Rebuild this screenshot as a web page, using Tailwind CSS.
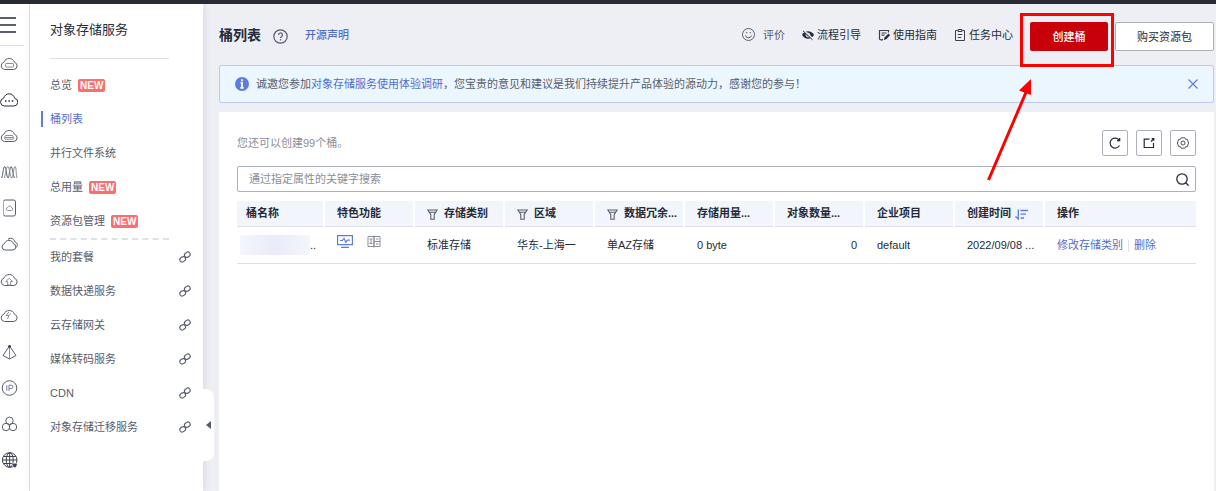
<!DOCTYPE html>
<html lang="zh-CN">
<head>
  <meta charset="UTF-8" />
  <meta name="viewport" content="width=device-width, initial-scale=1.0"/>
  <title>对象存储服务 - 桶列表</title>
  <script src="https://cdn.jsdelivr.net/npm/@tailwindcss/browser@4"></script>
</head>
<body class="min-h-screen flex flex-col overflow-x-hidden bg-[#eeeff5] font-['Liberation_Sans','Noto_Sans_CJK_SC',sans-serif] text-[11px] leading-4 text-[#252b3a]">
  <!-- Top bar -->
  <div class="h-1 bg-[#282b33]"></div>

  <div class="flex flex-1">
    <!-- Icon rail -->
    <nav class="w-[30px] shrink-0 bg-white border-r border-[#dfe1e6]" aria-label="服务">
      <button type="button" aria-label="菜单" class="block w-6 h-[42px] border-b border-[#dfe1e6]">
        <svg class="w-4 h-4" viewBox="0 0 16 16" stroke="#252b3a" stroke-width="1.6"><path d="M0 1h16M0 8h16M0 15h16"/></svg>
      </button>
      <ul class="w-5 text-[#575d6c] [&>li]:h-9 [&>li]:flex [&>li]:items-center [&_svg]:w-[18px] [&_svg]:h-[18px]">
        <li><a href="#" aria-label="云服务器"><svg viewBox="0 0 18 18" fill="none" stroke="currentColor"><path d="M4.5 14.5a3.7 3.7 0 0 1-.7-7.2C4.8 4.8 6.8 3.5 9.2 3.5s4.5 1.4 5.3 3.8a3.7 3.7 0 0 1-.7 7.2z"/><rect x="5.5" y="8.5" width="8" height="3.5" rx=".8" stroke="#8a8e99"/></svg></a></li>
        <li><a href="#" aria-label="弹性云"><svg viewBox="0 0 18 18" fill="none" stroke="#252b3a"><path d="M4.3 15a3.9 3.9 0 0 1-.7-7.7C4.4 4.4 6.6 2.8 9.2 2.8s4.7 1.6 5.5 4.5a3.9 3.9 0 0 1-.7 7.700z"/><path d="M5 10h1.500M8.400 10h1.500M11.800 10h1.500" stroke-width="1.400"/></svg></a></li>
        <li><a href="#" aria-label="裸金属"><svg viewBox="0 0 18 18" fill="none" stroke="currentColor"><path d="M4.500 14.500a3.700 3.700 0 0 1-.7-7.200C4.800 4.800 6.800 3.500 9.200 3.500s4.500 1.300 5.300 3.800a3.700 3.700 0 0 1-.7 7.200z"/><path d="M5.500 8.500h7l1.200 2-.6 1.700H5l-.6-1.700zM5 10.500h8" stroke="#8a8e99"/></svg></a></li>
        <li><a href="#" aria-label="伸缩"><svg viewBox="0 0 18 18" fill="none" stroke="currentColor"><path d="M1.500 15C3 13 3 3.500 4.700 3.500S6.500 15 8 15 9.500 3.500 11 3.500 13 13 14.500 15"/><path d="M4 15C5.800 13 6 3.500 7.800 3.500S10 13 11.500 15s2-11.500 3.500-11.500S16 13 17 15" stroke="#8a8e99"/></svg></a></li>
        <li><a href="#" aria-label="存储"><svg viewBox="0 0 18 18" fill="none" stroke="currentColor"><rect x="3.500" y="1" width="12" height="16" rx="1.800"/><path d="M7.500 11.500a1.500 1.500 0 0 1-.2-2.900c.4-1 1.200-1.500 2.200-1.500s1.800.5 2.200 1.500a1.500 1.500 0 0 1-.2 2.900z" stroke="#8a8e99"/><path d="M3.500 2v14" stroke="#6cb8f0"/></svg></a></li>
        <li><a href="#" aria-label="云备份"><svg viewBox="0 0 18 18" fill="none" stroke="currentColor"><path d="M5 15a3.200 3.200 0 0 1-.5-6.300C5.200 6.500 6.900 5.300 9 5.300s3.600 1.200 4.300 3.400A3.200 3.200 0 0 1 13 15z"/><path d="M8 4.300c2.700-2.200 6.400-.7 6.800 2.600 3 .7 3.400 4.500.9 5.700"/></svg></a></li>
        <li><a href="#" aria-label="上传"><svg viewBox="0 0 18 18" fill="none" stroke="currentColor"><path d="M4.500 14.500a3.700 3.700 0 0 1-.7-7.200C4.800 4.800 6.800 3.500 9.200 3.500s4.500 1.300 5.300 3.800a3.700 3.700 0 0 1-.7 7.200z"/><path d="M9.200 7.200 5.900 10.500h1.800v3.500h3v-3.500h1.800z" stroke="#8a8e99"/></svg></a></li>
        <li><a href="#" aria-label="加速"><svg viewBox="0 0 18 18" fill="none" stroke="currentColor"><path d="M4.500 14.500a3.700 3.700 0 0 1-.7-7.200C4.800 4.800 6.800 3.500 9.200 3.500s4.500 1.300 5.300 3.800a3.700 3.700 0 0 1-.7 7.200z"/><path d="M9 5 6 8.500h3L7.500 12M9 8.500l1.500-2" stroke="#8a8e99"/></svg></a></li>
        <li><a href="#" aria-label="网络"><svg viewBox="0 0 18 18" fill="none" stroke="currentColor"><path d="M9.500 3 3 12.500l6.500 3.500 6.500-3.500z"/><path d="M9.500 3v13" stroke="#8a8e99"/><circle cx="9.500" cy="3.200" r="1.200" fill="#252b3a" stroke="none"/></svg></a></li>
        <li><a href="#" aria-label="弹性公网IP"><svg viewBox="0 0 18 18" fill="none" stroke="currentColor"><circle cx="9.500" cy="9" r="7.300"/><path d="M6.800 6.200v5.600M9 11.800V6.200h2.200a1.700 1.700 0 0 1 0 3.400H9" stroke="#7c78a8"/></svg></a></li>
        <li><a href="#" aria-label="集群"><svg viewBox="0 0 18 18" fill="none" stroke="currentColor"><circle cx="9.500" cy="5.800" r="3.700"/><circle cx="6" cy="12" r="3.700"/><circle cx="13" cy="12" r="3.700"/></svg></a></li>
        <li><a href="#" aria-label="域名"><svg viewBox="0 0 18 18" fill="none" stroke="#3b4050"><circle cx="9.700" cy="9" r="7.300"/><ellipse cx="9.700" cy="9" rx="3.500" ry="7.300"/><path d="M9.700 1.700v14.600M2.400 9H17M3.500 5.500h12.400M3.500 12.500h12.400"/><path d="M12 12.500h5.500L16 16.500h-2.500z" fill="#3b4050" stroke="#fff" stroke-width=".5"/></svg></a></li>
      </ul>
    </nav>

    <!-- Service menu -->
    <aside class="relative w-[173px] shrink-0 bg-white pl-5 shadow-[2px_0_6px_rgba(60,65,90,0.10)]">
      <h2 class="h-[55px] mr-[34px] pt-4 text-[13px] leading-5 border-b border-[#dfe1e6]">对象存储服务</h2>
      <ul class="mt-[9px] mr-[34px] border-b-2 border-dashed border-[#dfe1e6] text-[#575d6c] [&>li]:h-[34px] [&>li]:flex [&>li]:items-center [&>li]:gap-[6px] [&_span]:px-[2px] [&_span]:h-[13px] [&_span]:leading-[13px] [&_span]:rounded-xs [&_span]:bg-[#fa6e6e] [&_span]:text-[10px] [&_span]:font-bold [&_span]:text-white">
        <li><a href="#">总览</a><span>NEW</span></li>
        <li class="relative text-[#526ecc]"><i class="absolute -left-[9px] w-[2px] h-4 bg-[#5e7ce0]"></i><a href="#">桶列表</a></li>
        <li><a href="#">并行文件系统</a></li>
        <li><a href="#">总用量</a><span>NEW</span></li>
        <li><a href="#">资源包管理</a><span>NEW</span></li>
      </ul>
      <ul id="external-links" class="mr-3 text-[#575d6c]"></ul>
      <button type="button" aria-label="收起" class="absolute left-full top-[385px] w-[11px] h-[72px] rounded-r-lg bg-white flex items-center justify-center">
        <svg class="w-[5px] h-2" viewBox="0 0 5 8" fill="#575d6c"><path d="M5 0v8L0 4z"/></svg>
      </button>
    </aside>

    <!-- Main -->
    <main class="flex-1 min-w-0 flex flex-col pl-4 pr-[2px]">
      <header class="flex items-center h-[61px] pt-1">
        <h1 class="pb-1 text-sm leading-5 font-bold">桶列表</h1>
        <button type="button" aria-label="帮助" class="ml-3">
          <svg class="w-[15px] h-[15px]" viewBox="0 0 15 15" fill="none" stroke="#575d6c" stroke-width="1.200"><circle cx="7.500" cy="7.500" r="6.700"/><path d="M5.500 6a2 2 0 1 1 3 1.700c-.7.400-1 .7-1 1.400M7.500 10v1.400"/></svg>
        </button>
        <a href="#" class="ml-[17px] pb-1 font-medium text-[#526ecc]">开源声明</a>

        <div class="ml-auto pb-1 flex items-center gap-[17px] [&>a]:flex [&>a]:items-center [&>a]:gap-[3px] [&_svg]:w-3 [&_svg]:h-3">
          <button type="button" class="flex items-center gap-2 text-[#575d6c] [&>svg]:w-[13px] [&>svg]:h-[13px]">
            <svg viewBox="0 0 13 13" fill="none" stroke="currentColor"><circle cx="6.500" cy="6.500" r="6"/><path d="M3.500 7.500a3.100 3.100 0 0 0 6 0M4 4.700h1.300M7.700 4.700H9"/></svg>
            评价
          </button>
          <a href="#">
            <svg viewBox="0 0 12 12" fill="#252b3a"><path d="M0 6c1.400-2.400 3.500-3.700 6-3.700S10.600 3.600 12 6c-1.400 2.400-3.500 3.700-6 3.700S1.400 8.400 0 6z"/><circle cx="6" cy="6" r="1.900" fill="none" stroke="#eeeff5"/><path d="M1.500 1.200 11 10.500" stroke="#eeeff5" stroke-width="2"/><path d="M1 1.800l9.500 9" stroke="#252b3a"/></svg>
            流程引导
          </a>
          <a href="#">
            <svg viewBox="0 0 12 12" fill="none" stroke="#3b4050" stroke-width="1.200"><path d="M10.500 3.500V1.500h-9v8.700l2 .8 1.500-.6M3.500 4h5M3.500 6.200h3"/><path d="m6 11 .5-2.500 4-4 1.500 1.700-3.700 4z" fill="#252b3a" stroke="none"/></svg>
            使用指南
          </a>
          <a href="#">
            <svg viewBox="0 0 12 12" fill="none" stroke="#3b4050"><path d="M3.500 1.500h-2v10h9v-10h-2M4 .5h4v2H4zM3.700 5.500h4.600M3.700 8.500h3.500"/></svg>
            任务中心
          </a>
        </div>

        <div class="relative ml-[17px]">
          <button type="button" class="block w-[78px] h-[29px] rounded-xs bg-[#c7000b] text-white font-medium">创建桶</button>
          <!-- Highlight frame and arrow around the create button -->
          <div class="absolute z-10 -left-[10px] -right-[6px] -top-[9px] -bottom-4 border-3 border-[#f00] pointer-events-none"></div>
          <svg class="absolute z-10 -left-[44px] top-[57px] w-[48px] h-[104px] pointer-events-none" viewBox="0 0 48 104" fill="#f00"><path d="M2.500 101 41 11" stroke="#f00" stroke-width="3"/><path d="M45 0v16L33 11.500z"/></svg>
        </div>
        <button type="button" class="ml-[7px] w-[99px] h-[29px] rounded-xs border border-[#adb0b8] bg-white">购买资源包</button>
      </header>

      <!-- Notice -->
      <section class="flex items-center h-[38px] px-[15px] rounded-xs border border-[#bcc9f5] bg-[#ebf6ff] text-[#575d6c]">
        <svg class="w-[14px] h-[14px] mr-[7px]" viewBox="0 0 14 14"><circle cx="7" cy="7" r="7" fill="#5e7ce0"/><path d="M7 2.300v2M5.600 5.800H7v4.700M5.300 10.800h3.400" fill="none" stroke="#fff" stroke-width="1.800"/></svg>
        <p>诚邀您参加<a href="#" class="text-[#526ecc]">对象存储服务使用体验调研</a>，您宝贵的意见和建议是我们持续提升产品体验的源动力，感谢您的参与！</p>
        <button type="button" aria-label="关闭" class="ml-auto">
          <svg class="w-[10px] h-[10px]" viewBox="0 0 10 10" stroke="#5e7ce0" stroke-width="1.200"><path d="m.5.500 9 9m0-9-9 9"/></svg>
        </button>
      </section>

      <!-- Bucket list -->
      <section class="flex-1 mt-[9px] px-[18px] pt-[18px] bg-white">
        <div class="flex items-center justify-between">
          <p class="text-[#8a8e99]">您还可以创建99个桶。</p>
          <div class="flex gap-2 [&>button]:w-[26px] [&>button]:h-[26px] [&>button]:flex [&>button]:items-center [&>button]:justify-center [&>button]:rounded-xs [&>button]:border [&>button]:border-[#adb0b8] [&_svg]:w-3 [&_svg]:h-3">
            <button type="button" aria-label="刷新"><svg viewBox="0 0 12 12" fill="none" stroke="#252b3a" stroke-width="1.200"><path d="M10.300 3.300A5 5 0 1 0 10.500 8.500M10.700 1v2.700H8"/></svg></button>
            <button type="button" aria-label="导出"><svg viewBox="0 0 12 12" fill="none" stroke="#252b3a" stroke-width="1.200"><path d="M6.500 2.200H1.200v8.300h9.300V6M8 4.500l2.500-2.500M8.700 1.700h2.100v2.100"/></svg></button>
            <button type="button" aria-label="设置"><svg viewBox="0 0 12 12" fill="none" stroke="#3b4050" stroke-width=".9"><path d="M4.200.8h3.600l.8 1.500 1.700.1L11.600 6l-1.300 3.600-1.700.1-.8 1.500H4.200l-.8-1.500-1.700-.1L.4 6l1.300-3.600 1.700-.1z"/><circle cx="6" cy="6" r="2"/></svg></button>
          </div>
        </div>

        <div class="flex items-center h-[26px] mt-[10px] pl-[11px] pr-[6px] rounded-xs border border-[#adb0b8]">
          <input type="search" aria-label="搜索" placeholder="通过指定属性的关键字搜索" class="flex-1 min-w-0 outline-none placeholder:text-[#8a8e99]">
          <button type="button" aria-label="搜索">
            <svg class="w-[13px] h-[13px]" viewBox="0 0 13 13" fill="none" stroke="#252b3a" stroke-width="1.300"><circle cx="6" cy="6" r="5.200"/><path d="m9.700 9.700 2.900 2.900"/></svg>
          </button>
        </div>

        <table class="w-full mt-[9px] table-fixed border-collapse text-left [&_th]:h-[25px] [&_th]:p-0 [&_th]:pl-3 [&_th]:border-r-2 [&_th]:border-r-white [&_th:last-child]:border-r-0 [&_th]:whitespace-nowrap [&_td]:h-[37px] [&_td]:pl-[13px] [&_td]:whitespace-nowrap [&_svg]:inline-block">
          <colgroup>
            <col class="w-[87px]"><col class="w-[90px]"><col class="w-[90px]"><col class="w-[90px]"><col class="w-[90px]"><col class="w-[90px]"><col class="w-[90px]"><col class="w-[90px]"><col class="w-[90px]"><col>
          </colgroup>
          <thead class="bg-[#f2f5fc] border-b border-[#dfe1e6]">
            <tr>
              <th><span class="-ml-[3px]">桶名称</span></th>
              <th>特色功能</th>
              <th><svg class="w-[11px] h-[11px] mr-[6px]" viewBox="0 0 11 11" fill="none" stroke="#575d6c" stroke-width="1.100"><path d="M.8 1h9.400L7.200 5.500v4.700H3.800V5.500zM2 3.200h7"/></svg>存储类别</th>
              <th><svg class="w-[11px] h-[11px] mr-[6px]" viewBox="0 0 11 11" fill="none" stroke="#575d6c" stroke-width="1.100"><path d="M.8 1h9.400L7.200 5.500v4.700H3.800V5.500zM2 3.200h7"/></svg>区域</th>
              <th><svg class="w-[11px] h-[11px] mr-[6px]" viewBox="0 0 11 11" fill="none" stroke="#575d6c" stroke-width="1.100"><path d="M.8 1h9.400L7.200 5.500v4.700H3.800V5.500zM2 3.200h7"/></svg>数据冗余...</th>
              <th>存储用量...</th>
              <th>对象数量...</th>
              <th>企业项目</th>
              <th>创建时间<svg class="w-[13px] h-[11px] ml-1" viewBox="0 0 13 11" fill="none" stroke="#5e7ce0" stroke-width="1.300"><path d="M3.300.500v9.500L.5 7.500M5.500 1.500H13M5.500 5.200h5.500M5.500 9h3.500"/></svg></th>
              <th>操作</th>
            </tr>
          </thead>
          <tbody>
            <tr class="border-b border-[#dfe1e6]">
              <td><div class="-ml-[10px] flex items-center"><span class="w-[70px] h-5 bg-linear-to-r from-[#f4f6fc] via-[#e9ecf8] to-[#f4f6fc]"></span>..</div></td>
              <td>
                <div class="flex items-center gap-[14px] pb-1.5">
                  <svg class="w-4 h-[13px]" viewBox="0 0 16 13" fill="none" stroke="#5e7ce0" stroke-width="1.200"><path d="M.6.600h14.800v9H.6zM4 12.400h8M3 5.500h2.300L7 3.300l1.800 4 1.600-2.200H13"/></svg>
                  <svg class="w-[14px] h-[13px]" viewBox="0 0 14 13" fill="none" stroke="#8a8e99"><path d="M7 .500v12M1 1.500h6v10H1zM7 1.500h6v10H7M2.500 4h3M2.500 8.500h3M4 4v4.500M7 6.500h6M9 4h2.500M9 9h2.500"/></svg>
                </div>
              </td>
              <td>标准存储</td>
              <td>华东-上海一</td>
              <td>单AZ存储</td>
              <td>0 byte</td>
              <td class="text-right pr-[7px]">0</td>
              <td>default</td>
              <td>2022/09/08 ...</td>
              <td class="text-[#526ecc]"><a href="#">修改存储类别</a><i class="inline-block align-middle w-px h-3 mx-[5px] bg-[#dfe1e6]"></i><a href="#">删除</a></td>
            </tr>
          </tbody>
        </table>
      </section>
    </main>
  </div>

  <script>
    const links = ["我的套餐", "数据快递服务", "云存储网关", "媒体转码服务", "CDN", "对象存储迁移服务"];

    const list = document.getElementById("external-links");

    links.forEach(name => {
      const li = document.createElement("li");
      li.innerHTML = `
        <a href="#" class="h-[34px] flex items-center justify-between">
          ${name}
          <svg class="w-3 h-3" viewBox="0 0 12 12" fill="none" stroke="#575d6c" stroke-width="1.100"><rect x="-3" y="-2.300" width="6" height="4.600" rx="2.300" transform="translate(3.700 8.300) rotate(-35)"/><rect x="-3" y="-2.300" width="6" height="4.600" rx="2.300" transform="translate(8.300 3.700) rotate(-35)"/></svg>
        </a>
      `;
      list.appendChild(li);
    });
  </script>
</body>
</html>
